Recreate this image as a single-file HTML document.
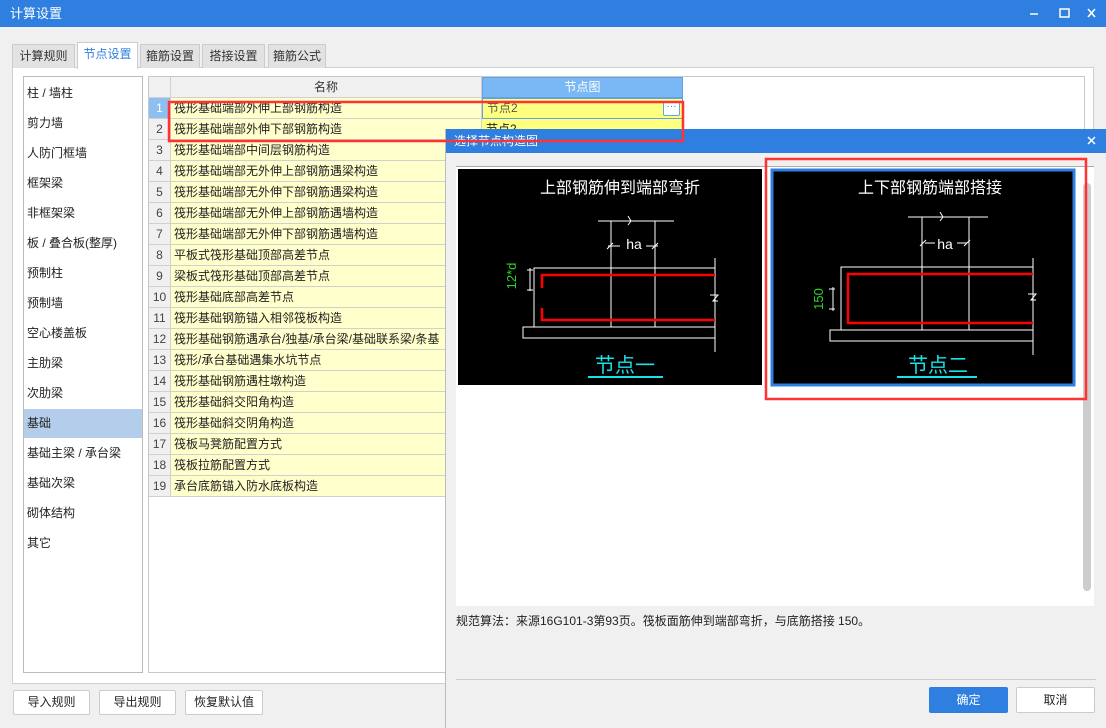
<!DOCTYPE html>
<html><head><meta charset="utf-8"><style>
*{margin:0;padding:0;box-sizing:border-box}
body{width:1106px;height:728px;overflow:hidden;background:#f0f0f0;font-family:"Liberation Sans","Noto Sans CJK SC",sans-serif;font-size:12px;color:#222;position:relative}
.abs{position:absolute}
.tb{left:0;top:0;width:1106px;height:27px;background:#2e7fe0;color:#fff;font-size:13px;line-height:27px;padding-left:10px}
.tab{top:44px;height:24px;background:#e2e2e2;border:1px solid #ccc;border-bottom:none;text-align:center;line-height:23px;color:#333}
.tab.on{background:#fff;color:#2e7fe0;top:42px;height:27px}
.panel{left:12px;top:67px;width:1082px;height:617px;background:#fff;border:1px solid #d0d0d0}
.list{left:23px;top:76px;width:120px;height:597px;border:1px solid #bbb;background:#fff}
.li{position:absolute;left:0;width:118px;height:29px;line-height:29px;padding-left:3px;font-size:12px}
.grid{left:148px;top:76px;width:937px;height:597px;border:1px solid #c8c8c8;background:#fff}
.row{position:absolute;left:0;height:21px;width:935px}
.num{position:absolute;left:0;width:22px;height:21px;background:#f0f0f0;border-right:1px solid #d0d0d0;border-bottom:1px solid #d0d0d0;text-align:center;line-height:20px;font-size:12px;color:#444}
.nm{position:absolute;left:22px;width:311px;height:21px;background:#ffffcc;border-right:1px solid #d0d0d0;border-bottom:1px solid #d0d0d0;line-height:20px;padding-left:3px;white-space:nowrap;overflow:hidden}
.btn{height:25px;top:690px;border:1px solid #ccc;border-radius:2px;background:#fff;text-align:center;line-height:23px}
.dlg{left:445px;top:129px;width:661px;height:599px;background:#f0f0f0;border-left:1px solid #bbb}
</style></head><body>
<div class="abs tb">计算设置</div>
<svg class="abs" style="left:1020px;top:0" width="86" height="27"><line x1="10" y1="14" x2="18" y2="14" stroke="#fff" stroke-width="1.5"/><rect x="40" y="9" width="9" height="8" fill="none" stroke="#fff" stroke-width="1.5"/><path d="M68 9l7 8M75 9l-7 8" stroke="#fff" stroke-width="1.6"/></svg>
<div class="abs panel"></div>
<div class="abs tab" style="left:12px;width:63px">计算规则</div>
<div class="abs tab on" style="left:77px;width:61px">节点设置</div>
<div class="abs tab" style="left:140px;width:60px">箍筋设置</div>
<div class="abs tab" style="left:202px;width:63px">搭接设置</div>
<div class="abs tab" style="left:268px;width:58px">箍筋公式</div>
<div class="abs list">
<div class="li" style="top:2px">柱 / 墙柱</div>
<div class="li" style="top:32px">剪力墙</div>
<div class="li" style="top:62px">人防门框墙</div>
<div class="li" style="top:92px">框架梁</div>
<div class="li" style="top:122px">非框架梁</div>
<div class="li" style="top:152px">板 / 叠合板(整厚)</div>
<div class="li" style="top:182px">预制柱</div>
<div class="li" style="top:212px">预制墙</div>
<div class="li" style="top:242px">空心楼盖板</div>
<div class="li" style="top:272px">主肋梁</div>
<div class="li" style="top:302px">次肋梁</div>
<div class="li" style="top:332px;background:#b3cdeb">基础</div>
<div class="li" style="top:362px">基础主梁 / 承台梁</div>
<div class="li" style="top:392px">基础次梁</div>
<div class="li" style="top:422px">砌体结构</div>
<div class="li" style="top:452px">其它</div>
</div>
<div class="abs grid">
<div class="row" style="top:0"><div class="num" style="height:21px"></div><div class="nm" style="background:#f0f0f0;text-align:center;padding:0;color:#333">名称</div><div style="position:absolute;left:333px;width:201px;height:21px;background:#7ab8f5;border:1px solid #5fa2e8;color:#fff;text-align:center;line-height:19px">节点图</div></div>
<div class="row" style="top:21px"><div class="num" style="background:#8cc0f0;color:#fff">1</div><div class="nm">筏形基础端部外伸上部钢筋构造</div><div style="position:absolute;left:333px;width:201px;height:21px;background:#ffff80;border:1px solid #5fa2e8;line-height:19px;padding-left:4px;color:#555">节点2<span style="position:absolute;right:2px;top:2px;width:17px;height:15px;background:#fff;border:1px solid #5fa2e8;border-radius:2px;line-height:9px;text-align:center;color:#2e7fe0;font-size:10px">···</span></div></div>
<div class="row" style="top:42px"><div class="num">2</div><div class="nm">筏形基础端部外伸下部钢筋构造</div><div style="position:absolute;left:333px;width:201px;height:21px;background:#ffff80;line-height:20px;padding-left:4px">节点2</div></div>
<div class="row" style="top:63px"><div class="num">3</div><div class="nm">筏形基础端部中间层钢筋构造</div></div>
<div class="row" style="top:84px"><div class="num">4</div><div class="nm">筏形基础端部无外伸上部钢筋遇梁构造</div></div>
<div class="row" style="top:105px"><div class="num">5</div><div class="nm">筏形基础端部无外伸下部钢筋遇梁构造</div></div>
<div class="row" style="top:126px"><div class="num">6</div><div class="nm">筏形基础端部无外伸上部钢筋遇墙构造</div></div>
<div class="row" style="top:147px"><div class="num">7</div><div class="nm">筏形基础端部无外伸下部钢筋遇墙构造</div></div>
<div class="row" style="top:168px"><div class="num">8</div><div class="nm">平板式筏形基础顶部高差节点</div></div>
<div class="row" style="top:189px"><div class="num">9</div><div class="nm">梁板式筏形基础顶部高差节点</div></div>
<div class="row" style="top:210px"><div class="num">10</div><div class="nm">筏形基础底部高差节点</div></div>
<div class="row" style="top:231px"><div class="num">11</div><div class="nm">筏形基础钢筋锚入相邻筏板构造</div></div>
<div class="row" style="top:252px"><div class="num">12</div><div class="nm">筏形基础钢筋遇承台/独基/承台梁/基础联系梁/条基</div></div>
<div class="row" style="top:273px"><div class="num">13</div><div class="nm">筏形/承台基础遇集水坑节点</div></div>
<div class="row" style="top:294px"><div class="num">14</div><div class="nm">筏形基础钢筋遇柱墩构造</div></div>
<div class="row" style="top:315px"><div class="num">15</div><div class="nm">筏形基础斜交阳角构造</div></div>
<div class="row" style="top:336px"><div class="num">16</div><div class="nm">筏形基础斜交阴角构造</div></div>
<div class="row" style="top:357px"><div class="num">17</div><div class="nm">筏板马凳筋配置方式</div></div>
<div class="row" style="top:378px"><div class="num">18</div><div class="nm">筏板拉筋配置方式</div></div>
<div class="row" style="top:399px"><div class="num">19</div><div class="nm">承台底筋锚入防水底板构造</div></div>
</div>
<div class="abs btn" style="left:13px;width:77px">导入规则</div>
<div class="abs btn" style="left:99px;width:77px">导出规则</div>
<div class="abs btn" style="left:185px;width:78px">恢复默认值</div>

<div class="abs dlg">
<div class="abs" style="left:0;top:0;width:661px;height:24px;background:#2e7fe0;color:#fff;line-height:24px;padding-left:8px;font-size:12px">选择节点构造图</div>
<div class="abs" style="left:10px;top:37px;width:638px;height:440px;background:#fff;border-top:1px solid #aaa"></div>
<div class="abs" style="left:637px;top:54px;width:8px;height:408px;background:#cdcdcd;border-radius:4px"></div>
<div class="abs" style="left:10px;top:483px;font-size:12px">规范算法：来源16G101-3第93页。筏板面筋伸到端部弯折，与底筋搭接 150。</div>
<div class="abs" style="left:10px;top:550px;width:640px;height:1px;background:#ccc"></div>
<div class="abs" style="left:483px;top:558px;width:79px;height:26px;background:#2e7fe0;color:#fff;text-align:center;line-height:26px;border-radius:2px">确定</div>
<div class="abs" style="left:570px;top:558px;width:79px;height:26px;background:#fff;border:1px solid #ccc;text-align:center;line-height:24px;border-radius:2px">取消</div>
</div>

<svg class="abs" style="left:0;top:0" width="1106" height="728" font-family="Liberation Sans,Noto Sans CJK SC,sans-serif">
<path d="M1088 137l7 7M1095 137l-7 7" stroke="#fff" stroke-width="1.5"/>
<rect x="458" y="169" width="304" height="216" fill="#000"/>
<rect x="772" y="170" width="302" height="215" fill="#000" stroke="#2e7fe0" stroke-width="3"/>
<g stroke="#fff" stroke-width="1" fill="none">
<line x1="598" y1="221" x2="674" y2="221"/><line x1="611" y1="221" x2="611" y2="327"/><line x1="655" y1="221" x2="655" y2="327"/>
<path d="M628 216l3 5-3 4M608 246h12M646 246h12M607 249l6-6M652 249l6-6"/>
<rect x="534" y="268" width="181" height="59"/><line x1="715" y1="258" x2="715" y2="352"/>
<rect x="523" y="327" width="192" height="11"/><path d="M710 295l8 0-5 6 5 0"/>
<path d="M527 270h6M527 290h6M530 268v23"/>
<line x1="908" y1="217" x2="988" y2="217"/><line x1="922" y1="217" x2="922" y2="330"/><line x1="969" y1="217" x2="969" y2="330"/>
<path d="M940 212l3 5-3 4M925 243h10M957 243h10M920 246l6-6M964 246l6-6"/>
<rect x="841" y="267" width="192" height="63"/><line x1="1033" y1="258" x2="1033" y2="355"/>
<rect x="830" y="330" width="203" height="11"/><path d="M1028 294l8 0-5 6 5 0"/>
<path d="M829 289h6M829 309h6M833 287v24"/>
</g>
<g stroke="#f00" stroke-width="2.5" fill="none">
<path d="M542 288v-13h173M542 308v12h173"/>
<path d="M1033 274h-185v49h185"/>
</g>
<g fill="#fff" font-size="16" text-anchor="middle"><text x="620" y="193">上部钢筋伸到端部弯折</text><text x="930" y="193">上下部钢筋端部搭接</text>
<text x="634" y="249" font-size="14">ha</text><text x="945" y="249" font-size="14">ha</text></g>
<g fill="#2bd52b" font-size="13" text-anchor="middle"><text transform="translate(516,276) rotate(-90)">12*d</text><text transform="translate(823,299) rotate(-90)">150</text></g>
<g fill="#1ae0e8" font-size="20" text-anchor="middle"><text x="625" y="372">节点一</text><text x="938" y="372">节点二</text></g>
<line x1="588" y1="377" x2="663" y2="377" stroke="#1ae0e8" stroke-width="2"/><line x1="897" y1="377" x2="977" y2="377" stroke="#1ae0e8" stroke-width="2"/>
<rect x="169" y="102" width="514" height="39" fill="none" stroke="#f33" stroke-width="2.5"/>
<rect x="766" y="159" width="320" height="240" fill="none" stroke="#f33" stroke-width="2.5"/>
</svg>
</body></html>
